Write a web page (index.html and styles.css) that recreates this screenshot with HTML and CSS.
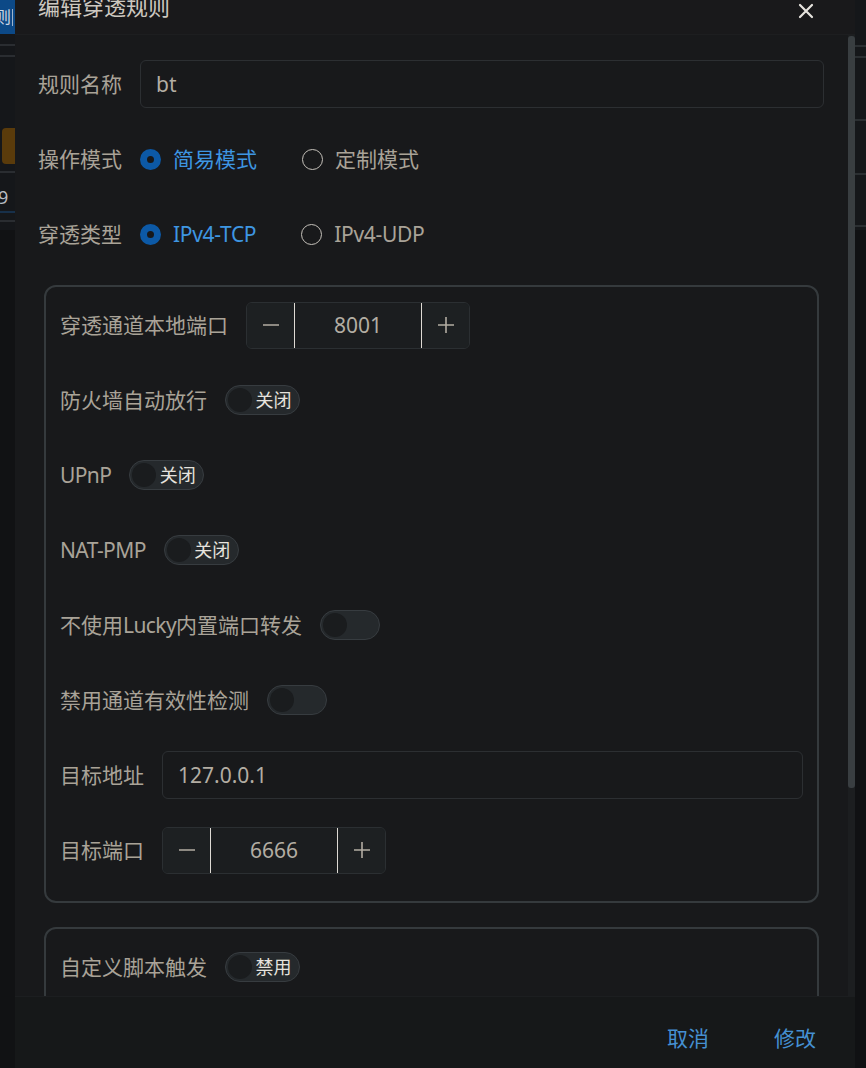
FILE: index.html
```html
<!DOCTYPE html>
<html lang="zh-CN">
<head>
<meta charset="utf-8">
<title>编辑穿透规则</title>
<link rel="stylesheet" href="styles.css">
</head>
<body>
<div class="screen">
  <aside class="page-left">
    <div class="pl-btn"><span>则</span><i></i></div>
    <div class="pl-line l1"></div>
    <div class="pl-line l2"></div>
    <div class="pl-orange"></div>
    <div class="pl-line l3"></div>
    <div class="pl-num">9</div>
    <div class="pl-line l4"></div>
    <div class="pl-line l5"></div>
  </aside>

  <div class="dialog">
    <header class="dlg-head">
      <h2 class="dlg-title">编辑穿透规则</h2>
      <button class="dlg-close" aria-label="关闭">
        <svg viewBox="0 0 16 16" width="16" height="16"><path d="M2 2 L14 14 M14 2 L2 14" stroke="#e6e3de" stroke-width="2.2" stroke-linecap="round" fill="none"/></svg>
      </button>
    </header>

    <div class="dlg-body">
      <div class="scroll-content">
        <div class="row">
          <label class="lbl">规则名称</label>
          <div class="input"><span>bt</span></div>
        </div>
        <div class="row">
          <label class="lbl">操作模式</label>
          <div class="radio on"><span class="dot"></span><span class="rtxt">简易模式</span></div>
          <div class="radio"><span class="dot"></span><span class="rtxt">定制模式</span></div>
        </div>
        <div class="row">
          <label class="lbl">穿透类型</label>
          <div class="radio on"><span class="dot"></span><span class="rtxt lat">IPv4-TCP</span></div>
          <div class="radio"><span class="dot"></span><span class="rtxt lat">IPv4-UDP</span></div>
        </div>

        <section class="card">
          <div class="row">
            <label class="lbl">穿透通道本地端口</label>
            <div class="num">
              <span class="nbtn"><svg viewBox="0 0 20 20" width="20" height="20"><path d="M2 10 H18" stroke="#b3ada3" stroke-width="1.6"/></svg></span>
              <span class="nval">8001</span>
              <span class="nbtn"><svg viewBox="0 0 20 20" width="20" height="20"><path d="M2 10 H18 M10 2 V18" stroke="#b3ada3" stroke-width="1.6"/></svg></span>
            </div>
          </div>
          <div class="row">
            <label class="lbl">防火墙自动放行</label>
            <div class="switch txt"><span class="knob"></span><span class="stxt">关闭</span></div>
          </div>
          <div class="row">
            <label class="lbl lat">UPnP</label>
            <div class="switch txt"><span class="knob"></span><span class="stxt">关闭</span></div>
          </div>
          <div class="row">
            <label class="lbl lat">NAT-PMP</label>
            <div class="switch txt"><span class="knob"></span><span class="stxt">关闭</span></div>
          </div>
          <div class="row">
            <label class="lbl">不使用<span class="lat">Lucky</span>内置端口转发</label>
            <div class="switch"><span class="knob"></span></div>
          </div>
          <div class="row">
            <label class="lbl">禁用通道有效性检测</label>
            <div class="switch"><span class="knob"></span></div>
          </div>
          <div class="row">
            <label class="lbl">目标地址</label>
            <div class="input"><span>127.0.0.1</span></div>
          </div>
          <div class="row">
            <label class="lbl">目标端口</label>
            <div class="num">
              <span class="nbtn"><svg viewBox="0 0 20 20" width="20" height="20"><path d="M2 10 H18" stroke="#b3ada3" stroke-width="1.6"/></svg></span>
              <span class="nval">6666</span>
              <span class="nbtn"><svg viewBox="0 0 20 20" width="20" height="20"><path d="M2 10 H18 M10 2 V18" stroke="#b3ada3" stroke-width="1.6"/></svg></span>
            </div>
          </div>
        </section>

        <section class="card">
          <div class="row">
            <label class="lbl">自定义脚本触发</label>
            <div class="switch txt"><span class="knob"></span><span class="stxt">禁用</span></div>
          </div>
          <div class="row">
            <label class="lbl">脚本</label>
          </div>
        </section>
      </div>
      <div class="scrollbar"><div class="thumb"></div></div>
    </div>

    <footer class="dlg-foot">
      <button class="tbtn">取消</button>
      <button class="tbtn">修改</button>
    </footer>
  </div>

  <aside class="page-right">
    <div class="pr-line a"></div>
    <div class="pr-line b"></div>
    <div class="pr-line c"></div>
    <div class="pr-line d"></div>
    <div class="pr-line e"></div>
  </aside>
</div>
</body>
</html>
```

FILE: styles.css
```css
* { box-sizing: border-box; }
html, body { margin: 0; padding: 0; }
body {
  background: #111214;
  font-family: "Noto Sans", "Noto Sans CJK SC", sans-serif;
  overflow: hidden;
  width: 866px;
  height: 1068px;
}
.screen {
  display: flex;
  width: 866px;
  height: 1068px;
}

/* background page, left strip */
.page-left {
  width: 15px;
  flex: none;
  background: linear-gradient(#15171a 0 230px, #111214 230px);
  display: flex;
  flex-direction: column;
  overflow: hidden;
}
.pl-btn {
  height: 34px;
  background: #0c4987;
  color: #cfd8e4;
  font-size: 16px;
  display: flex;
  align-items: center;
  overflow: hidden;
}
.pl-btn span { margin-left: -5px; line-height: 16px; }
.pl-btn i { width: 1px; height: 17px; background: #9fb4cc; margin-left: 1px; }
.pl-line { height: 2px; background: #2a2d31; flex: none; }
.pl-line.l1 { margin-top: 10px; }
.pl-line.l2 { margin-top: 9px; }
.pl-orange {
  margin: 71px 0 0 2px;
  height: 36px;
  background: #5a3b0b;
  border-radius: 4px 0 0 4px;
}
.pl-line.l3 { margin-top: 7px; }
.pl-num {
  color: #b8bcc2;
  font-size: 18px;
  line-height: 20px;
  margin: 14px 0 0 -2px;
}
.pl-line.l4 { margin-top: 4px; background: #17304a; }
.pl-line.l5 { margin-top: 7px; }

/* background page, right strip */
.page-right {
  width: 11px;
  flex: none;
  background: linear-gradient(#15171a 0 230px, #101113 230px);
  display: flex;
  flex-direction: column;
}
.pr-line { height: 2px; background: #2b2f32; }
.pr-line.a { margin-top: 45px; }
.pr-line.b { margin-top: 9px; }
.pr-line.c { margin-top: 61px; }
.pr-line.d { margin-top: 52px; }
.pr-line.e { margin-top: 50px; }

/* dialog */
.dialog {
  width: 840px;
  flex: none;
  display: flex;
  flex-direction: column;
  background: #18191b;
}
.dlg-head {
  height: 35px;
  flex: none;
  display: flex;
  align-items: flex-start;
  justify-content: space-between;
  padding: 0 41px 0 23px;
  background: #19191b;
  border-bottom: 1px solid #1d1e20;
  overflow: hidden;
}
.dlg-title {
  margin: -6px 0 0 0;
  font-size: 22px;
  line-height: 24px;
  font-weight: 400;
  color: #cdc8c0;
}
.dlg-close {
  margin-top: 3px;
  padding: 0;
  border: 0;
  background: none;
  width: 16px;
  height: 16px;
  display: flex;
}

.dlg-body {
  flex: 1;
  display: flex;
  min-height: 0;
  overflow: hidden;
}
.scroll-content {
  flex: 1;
  padding: 25px 24px 0 23px;
  overflow: hidden;
}
.scrollbar {
  width: 7px;
  flex: none;
  background: #1c1e20;
}
.thumb {
  margin-top: 1px;
  height: 752px;
  background: #393e41;
  border-radius: 3px;
}

.row {
  display: flex;
  align-items: center;
  height: 48px;
  margin-bottom: 27px;
}
.lbl {
  font-size: 21px;
  color: #a9a398;
  padding-right: 18px;
  white-space: nowrap;
  line-height: 28px;
}
.lat { letter-spacing: -0.6px; }
.input {
  flex: 1;
  height: 48px;
  border: 1px solid #2c2f32;
  border-radius: 6px;
  display: flex;
  align-items: center;
  padding-left: 15px;
  font-size: 21px;
  color: #b3ada3;
}

.radio {
  display: flex;
  align-items: center;
  margin-right: 45px;
}
.radio .dot {
  width: 21px;
  height: 21px;
  border-radius: 50%;
  border: 1.5px solid #c5c1ba;
  margin-right: 12px;
  flex: none;
}
.radio.on .dot {
  border: 7px solid #0c59a6;
  background: #17181a;
}
.rtxt {
  font-size: 21px;
  color: #a9a398;
  line-height: 28px;
}
.rtxt.lat { letter-spacing: -0.3px; }
.radio.on .rtxt { color: #3e96e2; }

.card {
  margin: 0 5px 24px 6px;
  border: 2px solid #353a3d;
  border-radius: 12px;
  padding: 14px 14px 0 14px;
}
.card:last-child { margin-bottom: 0; }

.num {
  width: 224px;
  height: 47px;
  display: flex;
  border: 1px solid #2b2f32;
  border-radius: 6px;
  background: #1b1d1f;
  overflow: hidden;
}
.nbtn {
  width: 48px;
  flex: none;
  display: flex;
  align-items: center;
  justify-content: center;
  background: #1d2022;
}
.nbtn:first-child { border-right: 1px solid #dedad4; }
.nbtn:last-child { border-left: 1px solid #dedad4; }
.nval {
  flex: 1;
  text-align: center;
  font-size: 21px;
  line-height: 45px;
  color: #b3ada3;
}

.switch {
  width: 60px;
  height: 30px;
  border-radius: 15px;
  background: #25292c;
  border: 1px solid #373c40;
  display: flex;
  align-items: center;
  padding-left: 2px;
}
.switch.txt { width: 75px; }
.knob {
  width: 24px;
  height: 24px;
  border-radius: 50%;
  background: #1a1c1e;
  flex: none;
}
.stxt {
  flex: 1;
  text-align: center;
  font-size: 18px;
  line-height: 20px;
  color: #e6e3de;
  padding-right: 4px;
}

.dlg-foot {
  height: 72px;
  flex: none;
  background: #161819;
  border-top: 1px solid #1c1e20;
  display: flex;
  align-items: center;
  justify-content: flex-end;
  gap: 65px;
  padding: 10px 39px 0 0;
}
.tbtn {
  border: 0;
  background: none;
  padding: 0;
  font-family: inherit;
  font-size: 21px;
  line-height: 28px;
  color: #4590d2;
}
```
